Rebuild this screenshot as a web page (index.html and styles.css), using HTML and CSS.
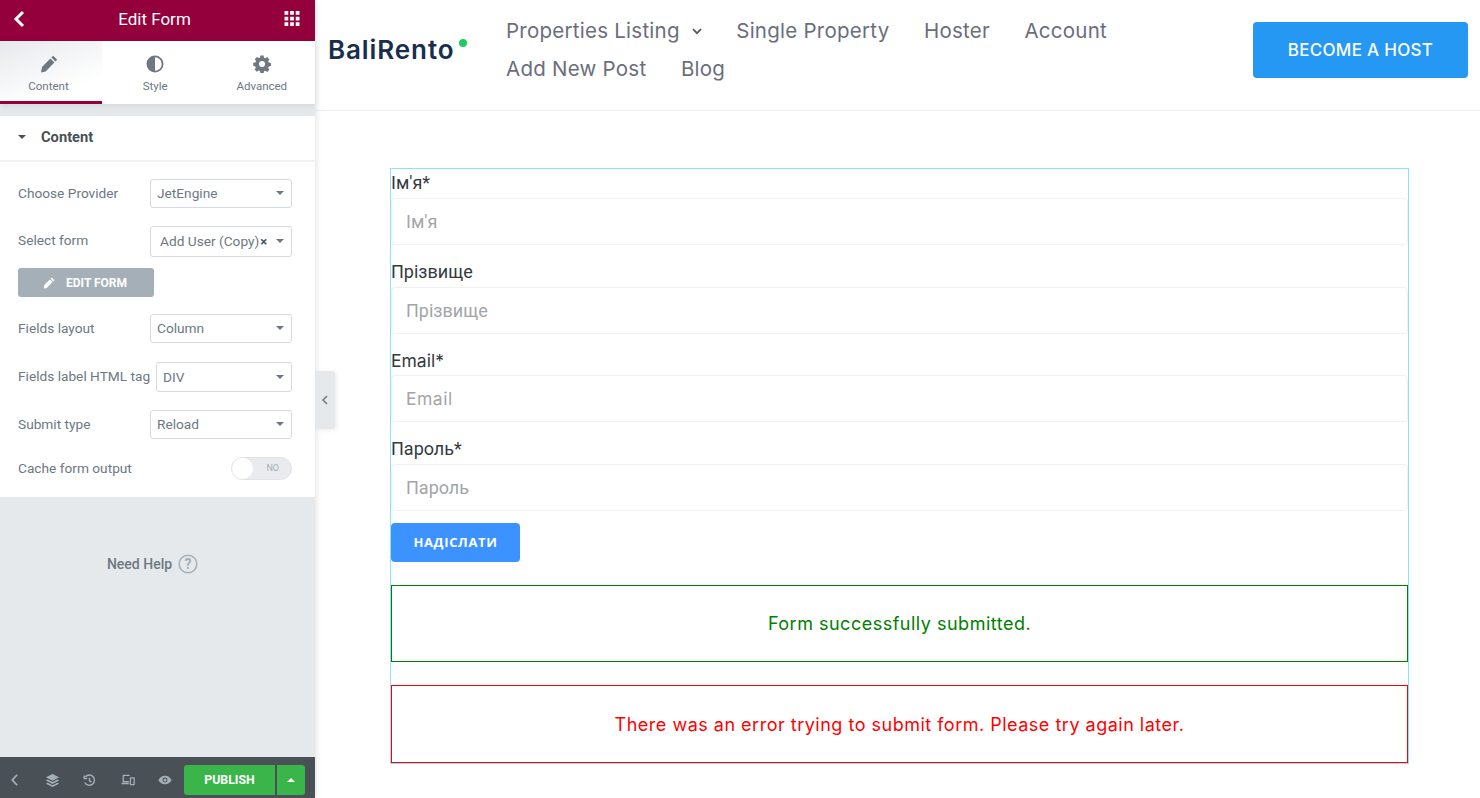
FILE: index.html
```html
<!DOCTYPE html>
<html lang="en">
<head>
<meta charset="utf-8">
<title>Edit Form</title>
<link rel="stylesheet" href="styles.css">
</head>
<body>
<aside class="panel">
  <header class="panel-head">
    <svg class="head-back" viewBox="0 0 12 18"><path d="M10 2 3 9l7 7" fill="none" stroke="#fff" stroke-width="3"/></svg>
    <span class="head-title">Edit Form</span>
    <svg class="head-grid" viewBox="0 0 16 16" fill="#fff"><path d="M0 0h4v4H0zM6 0h4v4H6zM12 0h4v4h-4zM0 6h4v4H0zM6 6h4v4H6zM12 6h4v4h-4zM0 12h4v4H0zM6 12h4v4H6zM12 12h4v4h-4z"/></svg>
  </header>
  <nav class="tabs">
    <div class="tab tab-active">
      <svg class="tab-icon" viewBox="0 0 18 18" fill="#6d7882"><path d="M13.2 0.8 17.2 4.8 15.4 6.6 11.4 2.6zM10.4 3.6 14.4 7.6 5.6 16.4 1 17.4 2 12z"/></svg>
      <span>Content</span>
    </div>
    <div class="tab">
      <svg class="tab-icon" viewBox="0 0 18 18"><circle cx="9" cy="9" r="7.6" fill="none" stroke="#6d7882" stroke-width="1.8"/><path d="M9 1.4a7.6 7.6 0 0 0 0 15.2z" fill="#6d7882"/></svg>
      <span>Style</span>
    </div>
    <div class="tab">
      <svg class="tab-icon" viewBox="0 0 18 18"><path fill="#6d7882" fill-rule="evenodd" d="M7.4 1h3.2l.4 2.2 1.3.6 1.9-1.2 2.2 2.3-1.2 1.8.6 1.4 2.2.4v3.1l-2.2.4-.6 1.4 1.2 1.8-2.2 2.2-1.9-1.2-1.3.6-.4 2.2H7.4L7 16.6l-1.3-.6-1.9 1.2-2.2-2.2 1.2-1.8-.6-1.4-2-.4V8.3l2.2-.4.6-1.4-1.2-1.8 2.2-2.3 1.8 1.2 1.3-.6zM9 6.4a3 3 0 1 0 0 6 3 3 0 0 0 0-6z" transform="translate(0 -.5)"/></svg>
      <span>Advanced</span>
    </div>
  </nav>
  <section class="controls">
    <h2 class="section-title"><i class="caret caret-dark"></i>Content</h2>
    <div class="fields">
      <div class="row row-provider"><label>Choose Provider</label><div class="select"><span>JetEngine</span><i class="caret"></i></div></div>
      <div class="row row-form"><label>Select form</label><div class="select select-tall"><span class="chosen">Add User (Copy)</span><b class="clear">×</b><i class="caret"></i></div></div>
      <div class="edit-btn">
        <svg viewBox="0 0 18 18" fill="#fff"><path d="M13.2 0.8 17.2 4.8 15.4 6.6 11.4 2.6zM10.4 3.6 14.4 7.6 5.6 16.4 1 17.4 2 12z"/></svg>
        <span>EDIT FORM</span>
      </div>
      <div class="row row-layout"><label>Fields layout</label><div class="select"><span>Column</span><i class="caret"></i></div></div>
      <div class="row row-tag"><label>Fields label HTML tag</label><div class="select select-narrow select-tag"><span>DIV</span><i class="caret"></i></div></div>
      <div class="row row-type"><label>Submit type</label><div class="select"><span>Reload</span><i class="caret"></i></div></div>
      <div class="row row-cache"><label>Cache form output</label><div class="toggle"><i class="knob"></i><span>NO</span></div></div>
    </div>
  </section>
  <div class="help">
    <span>Need Help</span>
    <svg viewBox="0 0 20 20"><circle cx="10" cy="10" r="8.8" fill="none" stroke="#a4afb7" stroke-width="1.5"/><text x="10" y="14.6" text-anchor="middle" class="help-mark">?</text></svg>
  </div>
  <footer class="panel-foot">
    <svg class="foot-icon foot-back" viewBox="0 0 10 16"><path d="M8 2 2.500 8 8 14" fill="none" stroke="#a4afb7" stroke-width="2"/></svg>
    <svg class="foot-icon foot-layers" viewBox="0 0 16 16" fill="#a4afb7"><path d="M8 1 15 4.600 8 8.200 1 4.600z"/><path d="M2.800 7 8 9.700 13.200 7 15 8 8 11.600 1 8z"/><path d="M2.800 10.400 8 13.100 13.200 10.400 15 11.400 8 15 1 11.400z"/></svg>
    <svg class="foot-icon foot-history" viewBox="0 0 16 16" fill="none" stroke="#a4afb7" stroke-width="1.800"><path d="M3 3.500A6.300 6.300 0 1 1 2.200 10.500"/><path d="M8 4.500V8.500l2.500 1.500"/><path d="M1.500 1.800v3.700h3.700" /></svg>
    <svg class="foot-icon foot-resp" viewBox="0 0 16 14" fill="none" stroke="#a4afb7" stroke-width="1.500"><path d="M10 1.500H2.500v7.500H9"/><path d="M.5 11H9" stroke-width="2"/><rect x="10.800" y="4.500" width="4.400" height="8" rx=".6"/></svg>
    <svg class="foot-icon foot-eye" viewBox="0 0 18 12"><path fill="#a4afb7" fill-rule="evenodd" d="M9 .5C5 .5 2 3 .5 6 2 9 5 11.500 9 11.500S16 9 17.500 6C16 3 13 .5 9 .5zM9 2.800a3.200 3.200 0 1 1 0 6.400 3.200 3.200 0 0 1 0-6.400z"/><circle cx="9" cy="6" r="2" fill="#a4afb7"/></svg>
    <div class="publish">PUBLISH</div>
    <div class="publish-more"><i class="caret-up"></i></div>
  </footer>
  <div class="collapse">
    <svg viewBox="0 0 8 12"><path d="M6 2 2 6l4 4" fill="none" stroke="#6d7882" stroke-width="1.500"/></svg>
  </div>
</aside>
<main class="site">
  <header class="site-head">
    <div class="logo">BaliRento<i class="logo-dot"></i></div>
    <nav class="menu">
      <a>Properties Listing<svg class="menu-chevron" viewBox="0 0 10 7"><path d="M1 1.200 5 5.200l4-4" fill="none" stroke="#54595f" stroke-width="1.800"/></svg></a>
      <a>Single Property</a>
      <a>Hoster</a>
      <a>Account</a>
      <a>Add New Post</a>
      <a>Blog</a>
    </nav>
    <a class="host-btn">BECOME A HOST</a>
  </header>
  <div class="content">
    <form class="form">
      <div class="form-label cyr">Ім'я*</div>
      <div class="input cyr">Ім'я</div>
      <div class="form-label cyr">Прізвище</div>
      <div class="input cyr">Прізвище</div>
      <div class="form-label latin">Email*</div>
      <div class="input latin">Email</div>
      <div class="form-label cyr">Пароль*</div>
      <div class="input cyr">Пароль</div>
      <div class="send">НАДІСЛАТИ</div>
      <div class="msg msg-ok">Form successfully submitted.</div>
      <div class="msg msg-err">There was an error trying to submit form. Please try again later.</div>
    </form>
  </div>
</main>
</body>
</html>
```
FILE: styles.css
```css
* { box-sizing: border-box; }
html, body { margin: 0; height: 100%; }
body {
  display: flex;
  width: 1480px;
  height: 798px;
  overflow: hidden;
  background: #fff;
  font-family: Roboto, "Liberation Sans", sans-serif;
}

/* Editor panel */
.panel {
  position: relative;
  flex: 0 0 315px;
  height: 798px;
  display: flex;
  flex-direction: column;
  background: #e6e9ec;
  box-shadow: 1px 0 6px rgba(0, 0, 0, .12);
  z-index: 2;
}
.panel-head {
  height: 41px;
  display: flex;
  align-items: center;
  justify-content: space-between;
  padding: 0 15px 4px 13px;
  background: #93003c;
  color: #fff;
}
.head-back { width: 12px; height: 18px; }
.head-title { font-size: 17px; }
.head-grid { width: 16px; height: 15px; }
.tabs {
  height: 63px;
  display: flex;
  background: #fff;
  box-shadow: 0 2px 6px rgba(0, 0, 0, .08);
}
.tab {
  flex: 1 1 0;
  display: flex;
  flex-direction: column;
  align-items: center;
  padding-top: 14px;
  color: #6d7882;
  font-size: 11.500px;
}
.tab span { margin-top: 7px; line-height: 13px; }
.tab-icon { width: 18px; height: 18px; }
.tab-active {
  flex: 0 0 102px;
  padding-right: 5px;
  background: linear-gradient(160deg, #e6e9ec, #fff 75%);
  border-bottom: 3px solid #93003c;
}
.controls {
  margin-top: 12px;
  height: 381px;
  background: #fff;
}
.section-title {
  height: 46px;
  margin: 0;
  display: flex;
  align-items: center;
  padding: 0 0 2px 18px;
  border-bottom: 2px solid #f1f3f5;
  color: #495157;
  font-size: 14.700px;
  font-weight: 700;
}
.caret {
  flex: none;
  width: 0;
  height: 0;
  border-left: 4px solid transparent;
  border-right: 4px solid transparent;
  border-top: 4px solid #6d7882;
}
.caret-dark { margin-right: 15px; border-top-color: #495157; }
.fields { padding: 17px 23px 0 18px; }
.row {
  display: flex;
  align-items: center;
  justify-content: space-between;
  color: #6d7882;
  font-size: 13.700px;
}
.row label { white-space: nowrap; padding-bottom: 1px; }
.row-form { margin-top: 18px; }
.row-form label { padding-bottom: 3px; }
.row-layout { margin-top: 17px; }
.row-tag { margin-top: 19px; }
.row-tag label { padding-bottom: 3px; }
.row-type { margin-top: 18px; }
.row-cache { margin-top: 18px; }
.select {
  width: 142px;
  height: 29px;
  flex: none;
  display: flex;
  align-items: center;
  padding: 0 7px 1px 6px;
  border: 1px solid #d5dadf;
  border-radius: 3px;
  color: #6d7882;
  font-size: 13.700px;
}
.select span { flex: 1; }
.select-tall { height: 31px; }
.select-tag { height: 30px; }
.select-narrow { width: 136px; }
.select .chosen { flex: none; margin-left: 3px; white-space: nowrap; }
.clear { margin: 0 auto 0 1px; font-size: 13px; color: #495157; line-height: 1; }
.edit-btn {
  width: 136px;
  height: 29px;
  margin-top: 11px;
  display: flex;
  align-items: center;
  padding-left: 25px;
  background: #a4afb7;
  border-radius: 3px;
  color: #fff;
  font-size: 12px;
  font-weight: 700;
}
.edit-btn svg { width: 12px; height: 12px; margin-right: 11px; }
.toggle {
  position: relative;
  width: 61px;
  height: 23px;
  background: #e9ebee;
  border: 1px solid #e0e3e6;
  border-radius: 12px;
  color: #a4afb7;
  font-size: 9px;
  line-height: 21px;
  text-align: right;
  padding-right: 12px;
}
.knob {
  position: absolute;
  left: 0;
  top: 0;
  width: 21px;
  height: 21px;
  background: #fff;
  border-radius: 50%;
}
.help {
  flex: 1;
  display: flex;
  align-items: flex-start;
  justify-content: center;
  padding: 57px 10px 0 0;
  gap: 6px;
  color: #6d7882;
  font-size: 14px;
  font-weight: 500;
  line-height: 20px;
}
.help svg { width: 20px; height: 20px; }
.help-mark { font: 700 14px Roboto, sans-serif; fill: #a4afb7; }
.panel-foot {
  height: 41px;
  flex: none;
  display: flex;
  align-items: center;
  padding: 5px 10px 0 10px;
  background: #495157;
}
.foot-icon { flex: none; }
.foot-back { width: 9px; height: 14px; }
.foot-layers { width: 15px; height: 15px; margin-left: 26px; }
.foot-history { width: 13px; height: 13px; margin-left: 23px; }
.foot-resp { width: 14px; height: 12px; margin-left: 25px; }
.foot-eye { width: 14px; height: 10px; margin-left: 23px; }
.publish {
  width: 91px;
  height: 30px;
  margin-left: 12px;
  display: flex;
  align-items: center;
  justify-content: center;
  background: #39b54a;
  border-radius: 3px 0 0 3px;
  color: #fff;
  font-size: 12.300px;
  font-weight: 700;
}
.publish-more {
  width: 28px;
  height: 30px;
  margin-left: 2px;
  display: flex;
  align-items: center;
  justify-content: center;
  background: #39b54a;
  border-radius: 0 3px 3px 0;
}
.caret-up {
  border-left: 4px solid transparent;
  border-right: 4px solid transparent;
  border-bottom: 4px solid #fff;
}
.collapse {
  position: absolute;
  left: 315px;
  top: 371px;
  width: 20px;
  height: 58px;
  display: flex;
  align-items: center;
  justify-content: center;
  background: #e6e9ec;
  border-radius: 0 3px 3px 0;
  box-shadow: 2px 1px 4px rgba(0, 0, 0, .08);
}
.collapse svg { width: 8px; height: 12px; }

/* Site preview */
.site { flex: 1; min-width: 0; font-family: Inter, sans-serif; }
.site-head {
  height: 111px;
  display: flex;
  align-items: flex-start;
  border-bottom: 1px solid #eaf0f5;
  padding: 12px 12px 0 13px;
}
.logo {
  position: relative;
  width: 178px;
  margin-top: 23px;
  color: #172e4e;
  font-size: 26px;
  font-weight: 600;
  line-height: 30px;
  letter-spacing: .9px;
}
.logo-dot {
  position: absolute;
  left: 131px;
  top: 4px;
  width: 8px;
  height: 8px;
  border-radius: 50%;
  background: #1ecb5f;
}
.menu {
  width: 725px;
  display: flex;
  flex-wrap: wrap;
  column-gap: 34.500px;
  color: #6a6e7c;
  font-size: 20.500px;
  letter-spacing: .25px;
  line-height: 38px;
}
.menu a { white-space: nowrap; }
.menu-chevron { width: 10px; height: 7px; margin: 0 0 3px 12px; }
.host-btn {
  width: 215px;
  height: 56px;
  margin: 10px 0 0 auto;
  display: flex;
  align-items: center;
  justify-content: center;
  background: #2498f3;
  border-radius: 4px;
  color: #fff;
  font-size: 17px;
  font-weight: 500;
  letter-spacing: .3px;
}
.content { padding: 57px 71px 0 75px; }
.form {
  height: 596px;
  padding-top: .3px;
  border: 1px solid #8fe2fb;
  display: flex;
  flex-direction: column;
}
.form-label {
  height: 28.700px;
  flex: none;
  color: #333a40;
  font-size: 18px;
  line-height: 28px;
}
.cyr { font-family: Roboto, sans-serif; }
.latin { font-family: Inter, sans-serif; }
.form-label.latin { font-size: 17.500px; }
.input {
  height: 47px;
  flex: none;
  margin-bottom: 13px;
  padding-left: 14px;
  border: 1px solid #f0f1f3;
  border-radius: 4px;
  color: #a3a5a8;
  font-size: 18px;
  line-height: 46px;
}
.input.latin { font-size: 17.500px; letter-spacing: .5px; }
.send {
  width: 129px;
  height: 39px;
  flex: none;
  margin-top: -1px;
  display: flex;
  align-items: center;
  justify-content: center;
  padding-bottom: 1px;
  background: #3c92ff;
  border-radius: 4px;
  color: #fff;
  font-family: "Open Sans", sans-serif;
  font-size: 13px;
  font-weight: 700;
  letter-spacing: .65px;
}
.msg {
  height: 77px;
  flex: none;
  display: flex;
  align-items: center;
  justify-content: center;
  border: 1px solid;
  font-size: 18px;
  letter-spacing: .5px;
}
.msg-ok { margin-top: 23px; border-color: #008000; color: #008000; }
.msg-err { margin-top: 23px; height: 78px; border-color: #f00; color: #f00; }
```
